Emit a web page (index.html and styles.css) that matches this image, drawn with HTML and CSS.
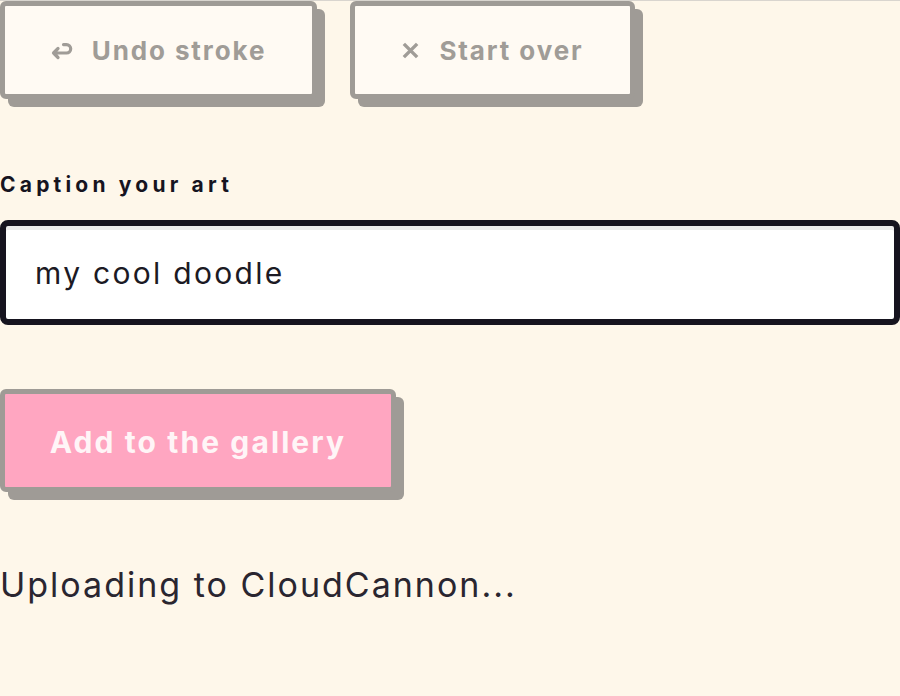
FILE: index.html
```html
<!DOCTYPE html>
<html lang="en">
<head>
<meta charset="utf-8">
<title>Caption your art</title>
<link rel="stylesheet" href="styles.css">
</head>
<body>
<div class="page">
  <div class="actions">
    <button class="btn btn-ghost btn-undo" type="button">
      <svg class="ico ico-undo" viewBox="0 0 22 18" aria-hidden="true"><path d="M7 6.5 L2.5 11 L7 15.5 M2.5 11 H15.5 A4.2 4.2 0 0 0 15.5 2.6 H12.5"/></svg>
      <span>Undo stroke</span>
    </button>
    <button class="btn btn-ghost btn-clear" type="button">
      <svg class="ico ico-x" viewBox="0 0 20 20" aria-hidden="true"><path d="M3 3 L17 17 M17 3 L3 17"/></svg>
      <span>Start over</span>
    </button>
  </div>
  <label class="caption-label" for="caption">Caption your art</label>
  <div class="field">
    <input id="caption" class="caption-input" type="text" value="my cool doodle">
  </div>
  <button class="btn btn-primary" type="button">Add to the gallery</button>
  <p class="status">Uploading to CloudCannon...</p>
</div>
</body>
</html>
```

FILE: styles.css
```css
* { box-sizing: border-box; }
html, body {
  margin: 0;
  padding: 0;
  background: #fef7ea;
}
body {
  font-family: Inter, "DejaVu Sans", sans-serif;
  color: #1c1a24;
  border-top: 1px solid #d9d5cf;
  height: 696px;
  overflow: hidden;
}
.page {
  display: flex;
  flex-direction: column;
  align-items: flex-start;
}
.actions {
  display: flex;
  gap: 33px;
}
.btn {
  font-family: inherit;
  display: inline-flex;
  align-items: center;
  justify-content: center;
  border: 5px solid #9f9b96;
  border-radius: 6px;
  box-shadow: 8px 8px 0 #9f9b96;
  cursor: pointer;
  font-weight: 700;
  padding: 0;
}
.btn-ghost {
  height: 98px;
  background: #fffaf3;
  color: #a09c97;
  font-size: 26px;
  letter-spacing: 1.9px;
  gap: 19px;
}
.btn-undo { width: 317px; }
.btn-clear { width: 285px; }
.ico {
  display: block;
  fill: none;
  stroke: #a09c97;
  stroke-width: 3.2;
  stroke-linecap: round;
  stroke-linejoin: round;
}
.ico-undo { width: 22px; height: 18px; margin-top: 2px; }
.ico-x { width: 19px; height: 19px; stroke-width: 3.6; stroke-linecap: butt; }
.caption-label {
  margin-top: 73px;
  font-size: 21px;
  font-weight: 700;
  letter-spacing: 4.2px;
  color: #16141f;
}
.field {
  width: 100%;
  margin-top: 23px;
}
.caption-input {
  display: block;
  width: 100%;
  height: 105px;
  border: 6px solid #16141f;
  border-radius: 8px;
  background: #ffffff;
  box-shadow: inset 0 4px 0 #ececec;
  padding: 0 29px;
  font-family: inherit;
  font-size: 30px;
  letter-spacing: 2.3px;
  color: #1c1a24;
  outline: none;
}
.btn-primary {
  margin-top: 64px;
  width: 396px;
  height: 103px;
  background: #ffa6c1;
  color: #fff5f7;
  font-size: 30px;
  letter-spacing: 2.1px;
  padding-top: 2px;
}
.status {
  margin: 72px 0 0;
  font-size: 34px;
  font-weight: 400;
  letter-spacing: 2px;
  color: #2a2630;
}
```
